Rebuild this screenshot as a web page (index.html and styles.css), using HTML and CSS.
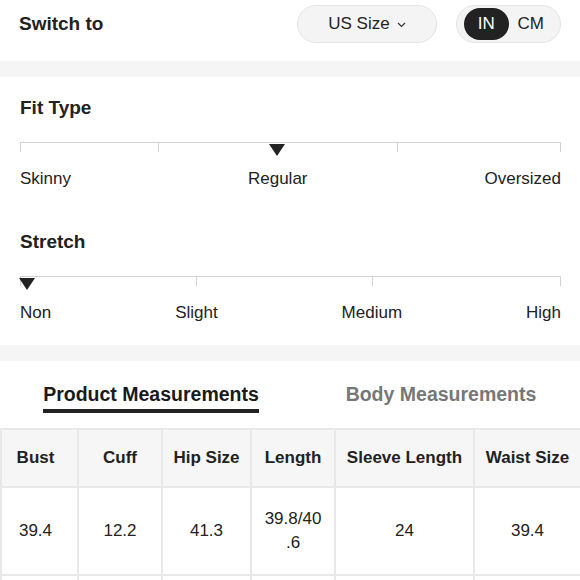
FILE: index.html
```html
<!DOCTYPE html>
<html>
<head>
<meta charset="utf-8">
<link rel="stylesheet" href="styles.css">
</head>
<body>
<div class="header">
  <div class="header-title">Switch to</div>
  <div class="header-controls">
    <div class="pill size-pill">
      <span>US Size</span>
      <svg class="chev" width="9" height="6" viewBox="0 0 9 6"><polyline points="1,1 4.5,4.5 8,1" fill="none" stroke="#333" stroke-width="1.2"/></svg>
    </div>
    <div class="pill unit-toggle">
      <span class="seg seg-active">IN</span>
      <span class="seg">CM</span>
    </div>
  </div>
</div>
<div class="band"></div>

<div class="section">
  <div class="section-title">Fit Type</div>
  <div class="track">
    <span class="tick" style="left:0"></span>
    <span class="tick" style="left:138px"></span>
    <span class="tick" style="left:377px"></span>
    <span class="tick tick-end"></span>
    <span class="marker" style="left:249px"></span>
  </div>
  <div class="labels">
    <span>Skinny</span><span>Regular</span><span>Oversized</span>
  </div>
</div>

<div class="section">
  <div class="section-title">Stretch</div>
  <div class="track">
    <span class="tick" style="left:0"></span>
    <span class="tick" style="left:176px"></span>
    <span class="tick" style="left:352px"></span>
    <span class="tick tick-end"></span>
    <span class="marker" style="left:-1px"></span>
  </div>
  <div class="labels">
    <span>Non</span><span>Slight</span><span>Medium</span><span>High</span>
  </div>
</div>
<div class="band"></div>

<div class="tabs">
  <div class="tab"><span class="tab-label active">Product Measurements</span></div>
  <div class="tab"><span class="tab-label">Body Measurements</span></div>
</div>

<table class="measure">
  <colgroup>
    <col class="c1"><col class="c2"><col class="c3"><col class="c4"><col class="c5"><col class="c6">
  </colgroup>
  <thead>
    <tr>
      <th class="first">Bust</th><th>Cuff</th><th>Hip Size</th><th>Length</th><th>Sleeve Length</th><th>Waist Size</th>
    </tr>
  </thead>
  <tbody>
    <tr>
      <td class="first">39.4</td><td>12.2</td><td>41.3</td><td><span class="wrap-val">39.8/40<wbr>.6</span></td><td>24</td><td>39.4</td>
    </tr>
    <tr class="empty">
      <td></td><td></td><td></td><td></td><td></td><td></td>
    </tr>
  </tbody>
</table>
</body>
</html>
```

FILE: styles.css
```css
html, body {
  margin: 0;
  padding: 0;
  background: #fff;
}
body {
  width: 580px;
  height: 580px;
  overflow: hidden;
  font-family: "Liberation Sans", Arial, sans-serif;
  color: #222;
}

.header {
  display: flex;
  align-items: center;
  justify-content: space-between;
  padding: 5px 19px 18px 19px;
}
.header-title {
  font-size: 19px;
  font-weight: bold;
  line-height: 22px;
}
.header-controls {
  display: flex;
  gap: 19px;
}
.pill {
  box-sizing: border-box;
  height: 38px;
  border: 1px solid #e3e3e3;
  background: #f4f4f4;
  border-radius: 19px;
  display: flex;
  align-items: center;
}
.size-pill {
  width: 140px;
  justify-content: center;
  gap: 7px;
  font-size: 17px;
  color: #222;
}
.chev {
  display: block;
  margin-top: 1px;
}
.unit-toggle {
  width: 105px;
  padding: 2px 7px;
}
.seg {
  flex: 1;
  height: 32px;
  border-radius: 16px;
  display: flex;
  align-items: center;
  justify-content: center;
  font-size: 17px;
  color: #222;
}
.seg-active {
  background: #222;
  color: #fff;
}

.band {
  height: 16px;
  background: #f5f5f5;
}

.section {
  padding: 20px 19px 22px 20px;
}
.section-title {
  font-size: 19px;
  font-weight: bold;
  line-height: 22px;
}
.track {
  position: relative;
  margin-top: 23px;
  height: 14px;
  border-top: 1px solid #d2d2d2;
}
.tick {
  position: absolute;
  top: 0;
  width: 1px;
  height: 9px;
  background: #d2d2d2;
}
.tick-end {
  right: 0;
}
.marker {
  position: absolute;
  top: 1px;
  width: 0;
  height: 0;
  border-left: 8.5px solid transparent;
  border-right: 8.5px solid transparent;
  border-top: 12px solid #222;
}
.labels {
  margin-top: 12px;
  display: flex;
  justify-content: space-between;
  font-size: 17px;
  line-height: 20px;
}

.tabs {
  display: grid;
  grid-template-columns: 302px 1fr;
  padding-top: 21px;
}
.tab {
  text-align: center;
}
.tab-label {
  display: inline-block;
  font-size: 19.5px;
  font-weight: bold;
  line-height: 24px;
  color: #777;
  padding-bottom: 3px;
  border-bottom: 4px solid transparent;
}
.tab-label.active {
  color: #1a1a1a;
  border-bottom-color: #222;
}

.measure {
  margin-top: 15px;
  width: 580px;
  border-collapse: collapse;
  table-layout: fixed;
}
.c1 { width: 77px; }
.c2 { width: 84px; }
.c3 { width: 89px; }
.c4 { width: 84px; }
.c5 { width: 139px; }
.c6 { width: 107px; }
.measure th,
.measure td {
  border: 2px solid #e8e8e8;
  text-align: center;
  vertical-align: middle;
}
.measure th {
  height: 56px;
  padding: 0 4px;
  background: #f6f6f6;
  font-size: 17px;
  font-weight: bold;
  color: #222;
}
.measure td {
  height: 86px;
  padding: 0 4px;
  font-size: 17px;
  line-height: 24px;
  color: #222;
}
.measure .first {
  padding-right: 8px;
  padding-left: 0;
}
.wrap-val {
  display: inline-block;
  width: 66px;
}
```
